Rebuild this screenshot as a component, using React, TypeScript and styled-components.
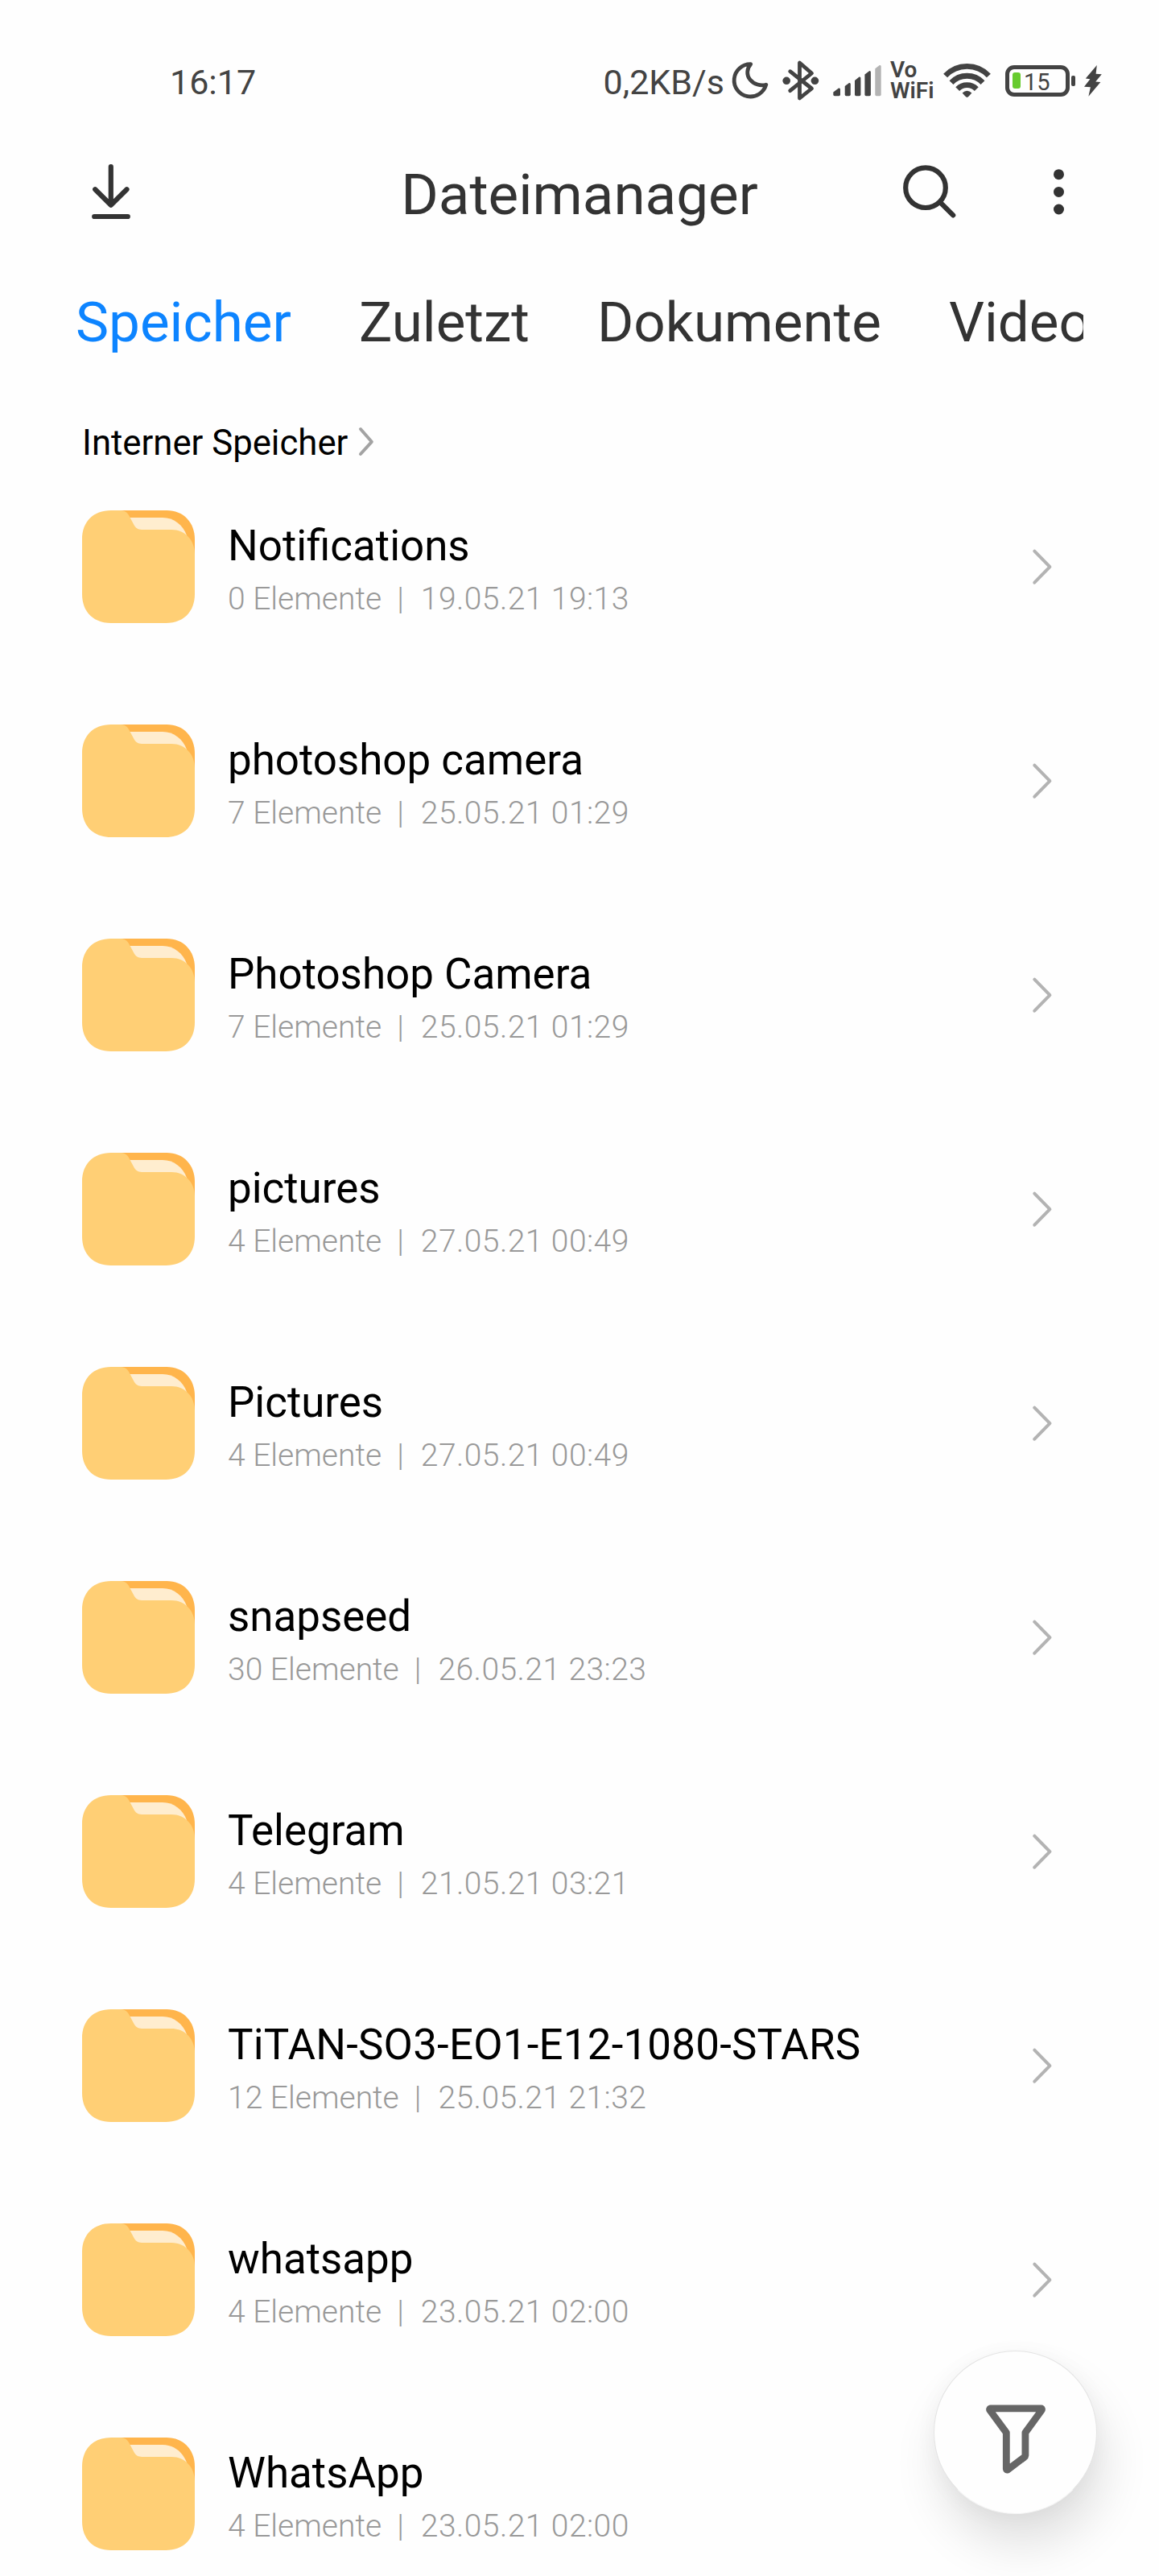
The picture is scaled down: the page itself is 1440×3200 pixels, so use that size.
import React from 'react';
import styled, { createGlobalStyle } from 'styled-components';

const GlobalStyle = createGlobalStyle`
  *, *::before, *::after { box-sizing: border-box; }
  body {
    margin: 0;
    background: #fefefe;
    font-family: Roboto, "Liberation Sans", sans-serif;
  }
`;

const INK = '#333333';
const STATUS = '#434343';

const Screen = styled.main`
  position: relative;
  display: flex;
  flex-direction: column;
  width: 1440px;
  height: 3200px;
  overflow: hidden;
  background: #fefefe;
`;

const Icon = styled.svg`
  display: block;
  flex: none;
  overflow: visible;
`;

/* Status bar */
const StatusBar = styled.div`
  display: flex;
  align-items: center;
  justify-content: space-between;
  height: 170px;
  padding: 30px 71px 0 211px;
  color: ${STATUS};
`;

const StatusText = styled.span`
  margin-top: 4px;
  font-size: 43px;
  line-height: 52px;
`;

const StatusIcons = styled.div`
  display: flex;
  align-items: center;
`;

const StatusItem = styled.div<{ $gap: number }>`
  display: flex;
  margin-left: ${(p) => p.$gap}px;
`;

const VoWifi = styled.div`
  display: flex;
  flex-direction: column;
  width: 53px;
  font-size: 28px;
  font-weight: 600;
  line-height: 26.5px;
  white-space: nowrap;
`;

const Battery = styled.div`
  display: flex;
  align-items: center;
  gap: 2px;
`;

const BatteryCase = styled.div`
  display: flex;
  align-items: center;
  gap: 4px;
  width: 80px;
  height: 39px;
  padding-left: 4px;
  border: 5px solid ${STATUS};
  border-radius: 11px;
`;

const BatteryLevel = styled.div`
  width: 10px;
  height: 20px;
  border-radius: 3px;
  background: #67cb2f;
`;

const BatteryText = styled.span`
  margin-top: 3px;
  font-size: 29px;
  line-height: 30px;
`;

const BatteryTip = styled.div`
  width: 5px;
  height: 13px;
  border-radius: 2px;
  background: ${STATUS};
`;

/* App header */
const Header = styled.header`
  display: grid;
  grid-template-columns: 1fr auto 1fr;
  align-items: center;
  height: 136px;
  padding: 0 118px 0 114px;
`;

const Title = styled.h1`
  margin: 7px 0 0;
  padding-left: 4px;
  color: ${INK};
  font-size: 71px;
  font-weight: 400;
  line-height: 84px;
`;

const Actions = styled.div`
  display: flex;
  align-items: center;
  justify-content: flex-end;
  gap: 121px;
`;

const Tabs = styled.nav`
  display: flex;
  align-items: center;
  gap: 84px;
  width: 1252px;
  height: 188px;
  margin-left: 94px;
  padding-top: 2px;
  overflow: hidden;
`;

const Tab = styled.span<{ $active?: boolean }>`
  flex: none;
  color: ${(p) => (p.$active ? '#0d84ff' : INK)};
  font-size: 69.2px;
  line-height: 82px;
`;

const Breadcrumb = styled.div`
  display: flex;
  align-items: center;
  gap: 14px;
  height: 112px;
  padding-left: 102px;
  color: #000;
  font-size: 43.7px;
`;

const Crumb = styled.span`
  line-height: 52px;
`;

/* Folder list */
const List = styled.ul`
  display: flex;
  flex-direction: column;
  gap: 126px;
  margin: 0;
  padding: 28px 133px 0 102px;
  list-style: none;
`;

const Row = styled.li`
  display: flex;
  align-items: center;
  height: 140px;
`;

const RowText = styled.div`
  display: flex;
  flex: 1;
  flex-direction: column;
  gap: 10px;
  height: 140px;
  padding: 13px 0 0 41px;
`;

const Name = styled.span<{ $tracking?: number }>`
  color: #000;
  font-size: 52.9px;
  line-height: 62px;
  letter-spacing: ${(p) => (p.$tracking ? `${p.$tracking}px` : 'normal')};
`;

const Meta = styled.span`
  color: #999;
  font-size: 39px;
  font-weight: 300;
  line-height: 50px;
  white-space: pre;
`;

const MetaDate = styled.span`
  margin-left: 2px;
  letter-spacing: 0.45px;
`;

const FilterButton = styled.button`
  position: absolute;
  top: 2920px;
  left: 1160px;
  display: flex;
  align-items: center;
  justify-content: center;
  width: 203px;
  height: 203px;
  padding: 16px 0 0 1px;
  border: 1px solid #e4e4e4;
  border-bottom-color: #f4f4f4;
  border-radius: 50%;
  background: #fefefe;
  box-shadow: 8px 38px 60px rgba(0, 0, 0, 0.12), 0 4px 28px rgba(0, 0, 0, 0.04);
`;

const folders = [
  { name: 'Notifications', count: 0, date: '19.05.21 19:13' },
  { name: 'photoshop camera', count: 7, date: '25.05.21 01:29' },
  { name: 'Photoshop Camera', count: 7, date: '25.05.21 01:29' },
  { name: 'pictures', count: 4, date: '27.05.21 00:49' },
  { name: 'Pictures', count: 4, date: '27.05.21 00:49' },
  { name: 'snapseed', count: 30, date: '26.05.21 23:23' },
  { name: 'Telegram', count: 4, date: '21.05.21 03:21' },
  { name: 'TiTAN-SO3-EO1-E12-1080-STARS', count: 12, date: '25.05.21 21:32', tracking: 0.2 },
  { name: 'whatsapp', count: 4, date: '23.05.21 02:00' },
  { name: 'WhatsApp', count: 4, date: '23.05.21 02:00' },
];

const MoonIcon = () => (
  <Icon width="44" height="46" viewBox="0 0 44 46" fill="none" stroke={STATUS} strokeWidth="4.8" strokeLinejoin="round">
    <path d="M21.7 2.6A20.2 20.2 0 1 0 40.8 28.2C34 30 26 28 21 22C16 16 17 8 21.7 2.6Z" />
  </Icon>
);

const BluetoothIcon = () => (
  <Icon width="46" height="50" viewBox="0 0 46 50">
    <path
      d="M9.7 37.7L36.5 16L21.5 3V47L36.5 35L9.7 13.7"
      fill="none"
      stroke={STATUS}
      strokeWidth="4.8"
      strokeLinecap="round"
      strokeLinejoin="round"
    />
    <circle cx="5.2" cy="25.3" r="4.8" fill={STATUS} />
    <circle cx="40.4" cy="25.3" r="4.8" fill={STATUS} />
  </Icon>
);

const SignalIcon = () => (
  <Icon width="60" height="40" viewBox="0 0 60 40" fill={STATUS}>
    <path d="M0.3 34.5L7 29.5Q9 29 9 31V37.5Q9 39.2 7.3 39.2H2Q0.3 39.2 0.3 37.5Z" />
    <path d="M14.7 27L20 23Q21.8 22.5 21.8 24.5V37.5Q21.8 39.2 20 39.2H16.4Q14.7 39.2 14.7 37.5Z" />
    <path d="M27 20L32.5 15.5Q34.4 15 34.4 17V37.5Q34.4 39.2 32.7 39.2H28.7Q27 39.2 27 37.5Z" />
    <path d="M39.4 12.5L45 8.2Q46.9 7.7 46.9 9.7V37.5Q46.9 39.2 45.2 39.2H41.1Q39.4 39.2 39.4 37.5Z" />
    <path fill="#b3b3b3" d="M52.3 5.2L57.8 1Q59.7 .5 59.7 2.5V37.5Q59.7 39.2 58 39.2H54Q52.3 39.2 52.3 37.5Z" />
  </Icon>
);

const WifiIcon = () => (
  <Icon width="59" height="44" viewBox="0 0 59 44">
    <g fill="none" stroke={STATUS} strokeWidth="6.8">
      <path d="M2.6 16A37 37 0 0 1 56.4 16" />
      <path d="M10 24.6A27 27 0 0 1 49 24.6" />
      <path d="M17.7 32.6A16.5 16.5 0 0 1 41.3 32.6" />
    </g>
    <path d="M23.6 37.5Q29.5 32 35.4 37.5L31.5 41.8Q29.5 44 27.5 41.8Z" fill={STATUS} />
  </Icon>
);

const BoltIcon = () => (
  <Icon width="22" height="39" viewBox="0 0 22 39">
    <path d="M15.8 0L14.6 10.8L21.8 11.3L14.2 20.4L20.4 21L5.4 38.8L7.9 27.2L0 26.8L7.4 17.3L1.8 16.4Z" fill={STATUS} />
  </Icon>
);

const DownloadIcon = () => (
  <Icon width="48" height="69" viewBox="0 0 48 69" fill="none" stroke={INK} strokeWidth="6.2" strokeLinecap="round" strokeLinejoin="round">
    <path d="M23.8 3.2V50.5M4.2 31.2L23.8 50.8L43.5 31.2M3.2 65H44.8" />
  </Icon>
);

const SearchIcon = () => (
  <Icon width="66" height="66" viewBox="0 0 66 66" fill="none" stroke={INK} strokeWidth="6.2" strokeLinecap="round">
    <circle cx="28" cy="28.2" r="24.8" />
    <path d="M46.5 46.7L62.2 62.4" />
  </Icon>
);

const MoreIcon = () => (
  <Icon width="13" height="57" viewBox="0 0 13 57" fill={INK}>
    <circle cx="6.5" cy="6.7" r="6.5" />
    <circle cx="6.5" cy="28.4" r="6.5" />
    <circle cx="6.5" cy="50" r="6.5" />
  </Icon>
);

const FolderIcon = () => (
  <Icon width="140" height="140" viewBox="0 0 140 140">
    <path d="M45 0H105C126 0 140 15 140 36V70H45Z" fill="#ffb54c" />
    <path d="M56 9H100C114 9 125 18 130 31L110 40H60Z" fill="#ffedcf" />
    <path
      d="M36 0H48C54 0 57 3.5 59.6 9L65 19C67.5 23 70.5 24 76 24H111C128 24 140 37 140 54V104C140 126 126 140 104 140H36C14 140 0 126 0 104V36C0 14 14 0 36 0Z"
      fill="#ffcf75"
    />
  </Icon>
);

const CrumbChevron = () => (
  <Icon width="18" height="35" viewBox="0 0 18 35" fill="none" stroke="#a3a3a3" strokeWidth="4" strokeLinecap="round" strokeLinejoin="round">
    <path d="M2 0L15.8 15.8L2 31" />
  </Icon>
);

const RowChevron = () => (
  <Icon width="24" height="43" viewBox="0 0 24 43" fill="none" stroke="#b3b3b3" strokeWidth="4" strokeLinecap="round" strokeLinejoin="round">
    <path d="M2.3 1.7L21.4 21.1L2.3 40.7" />
  </Icon>
);

const FunnelIcon = () => (
  <Icon width="74" height="86" viewBox="0 0 74 86" fill="none" stroke="#666" strokeWidth="8.8" strokeLinejoin="round">
    <path d="M5.6 4.8H68.6Q70 5.5 69.2 7L48.9 34.8V63.2Q48.8 64.6 47.6 65.4L27 81Q25.4 81.4 25.3 80V34.8L4.8 7Q4 5.4 5.6 4.8Z" />
  </Icon>
);

export default function App() {
  return (
    <>
      <GlobalStyle />
      <Screen>
        <StatusBar>
          <StatusText>16:17</StatusText>
          <StatusIcons>
            <StatusText>0,2KB/s</StatusText>
            <StatusItem $gap={11}><MoonIcon /></StatusItem>
            <StatusItem $gap={17}><BluetoothIcon /></StatusItem>
            <StatusItem $gap={17}><SignalIcon /></StatusItem>
            <StatusItem $gap={11}>
              <VoWifi>
                <span>Vo</span>
                <span>WiFi</span>
              </VoWifi>
            </StatusItem>
            <StatusItem $gap={13}><WifiIcon /></StatusItem>
            <StatusItem $gap={18}>
              <Battery>
                <BatteryCase>
                  <BatteryLevel />
                  <BatteryText>15</BatteryText>
                </BatteryCase>
                <BatteryTip />
              </Battery>
            </StatusItem>
            <StatusItem $gap={11}><BoltIcon /></StatusItem>
          </StatusIcons>
        </StatusBar>

        <Header>
          <DownloadIcon />
          <Title>Dateimanager</Title>
          <Actions>
            <SearchIcon />
            <MoreIcon />
          </Actions>
        </Header>

        <Tabs>
          <Tab $active>Speicher</Tab>
          <Tab>Zuletzt</Tab>
          <Tab>Dokumente</Tab>
          <Tab>Videos</Tab>
        </Tabs>

        <Breadcrumb>
          <Crumb>Interner Speicher</Crumb>
          <CrumbChevron />
        </Breadcrumb>

        <List>
          {folders.map((folder) => (
            <Row key={folder.name}>
              <FolderIcon />
              <RowText>
                <Name $tracking={folder.tracking}>{folder.name}</Name>
                <Meta>
                  {`${folder.count} Elemente  |  `}
                  <MetaDate>{folder.date}</MetaDate>
                </Meta>
              </RowText>
              <RowChevron />
            </Row>
          ))}
        </List>

        <FilterButton aria-label="Filter">
          <FunnelIcon />
        </FilterButton>
      </Screen>
    </>
  );
}
